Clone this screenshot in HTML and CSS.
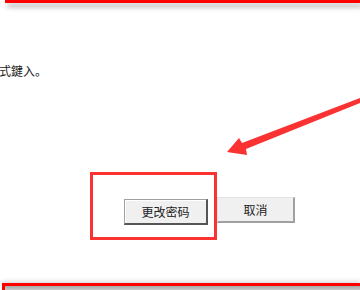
FILE: index.html
```html
<!DOCTYPE html>
<html lang="zh-CN">
<head>
  <meta charset="UTF-8">
  <title>更改密码</title>
  <link rel="stylesheet" href="styles.css">
</head>
<body>
  <div class="page">
    <div class="top-frame"></div>

    <p class="hint">式鍵入。</p>

    <div class="button-row">
      <div class="highlight">
        <button class="btn btn-default">更改密码</button>
      </div>
      <button class="btn">取消</button>
    </div>

    <div class="bottom-frame"></div>

    <!-- 标注箭头 -->
    <svg class="arrow" width="360" height="290" viewBox="0 0 360 290">
      <polygon points="360,98 360,103 246,149 247,155 227,152 239,138 242,143" fill="#fb3232"/>
    </svg>
  </div>
</body>
</html>
```

FILE: styles.css
```css
* {
  margin: 0;
  padding: 0;
  box-sizing: border-box;
}

body {
  background-color: #fff;
  font-family: "Noto Sans CJK SC", "Noto Sans CJK TC", sans-serif;
  color: #222;
}

.page {
  position: relative;
  width: 360px;
  height: 290px;
  overflow: hidden;
  display: flex;
  flex-direction: column;
}

.top-frame {
  height: 3px;
  margin-left: 5px;
  background-color: #ff0000;
  box-shadow: 2px 4px 5px rgba(0, 0, 0, 0.35);
}

.hint {
  margin-top: 60px;
  margin-left: -1px;
  font-size: 12px;
  line-height: 16px;
}

.button-row {
  display: flex;
  align-items: flex-start;
  margin-top: 93px;
  margin-left: 90px;
}

.highlight {
  width: 127px;
  height: 68px;
  border: 3px solid #fb3232;
  padding: 23px 0 0 31px;
}

.btn {
  height: 26px;
  width: 78px;
  margin-top: 25px;
  font-family: "Noto Sans CJK SC", sans-serif;
  font-size: 12px;
  color: #222;
  background-color: #f0f0f0;
  border-style: solid;
  border-width: 1px 2px 2px 1px;
  border-color: #e3e3e3 #a0a0a0 #a0a0a0 #e3e3e3;
}

.btn-default {
  width: 84px;
  margin-top: 0;
  border-color: #a0a0a0 #555 #555 #a0a0a0;
  box-shadow: inset 1px 1px #fff;
}

.bottom-frame {
  margin-top: 43px;
  margin-left: 2px;
  flex: 1;
  border-top: 3px solid #ff0000;
  border-left: 3px solid #ff0000;
  background: linear-gradient(#a8a8a8, #c8c8c8);
  box-shadow: 0 -2px 4px rgba(0, 0, 0, 0.15);
}

.arrow {
  position: absolute;
  left: 0;
  top: 0;
}
```
